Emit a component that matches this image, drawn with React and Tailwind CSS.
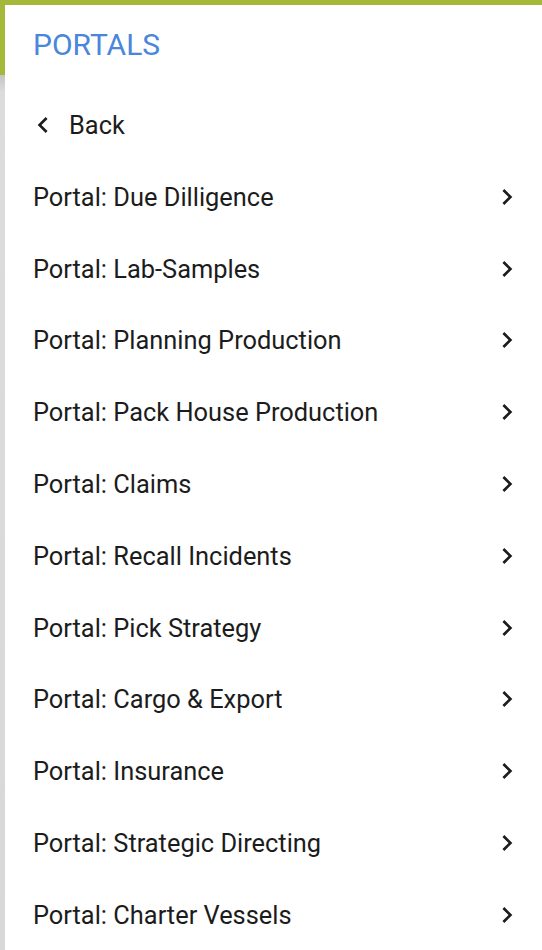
const portals = [
  "Due Dilligence",
  "Lab-Samples",
  "Planning Production",
  "Pack House Production",
  "Claims",
  "Recall Incidents",
  "Pick Strategy",
  "Cargo & Export",
  "Insurance",
  "Strategic Directing",
  "Charter Vessels",
];

function Chevron({ left = false }) {
  return (
    <svg width="32" height="32" viewBox="0 0 24 24" className="shrink-0 fill-[#1c1c1c]">
      {left ? (
        <path d="M15.41 7.41L14 6l-6 6 6 6 1.41-1.41L10.83 12z" />
      ) : (
        <path d="M10 6L8.59 7.41 13.17 12l-4.58 4.59L10 18l6-6z" />
      )}
    </svg>
  );
}

export default function App() {
  return (
    <div className="h-[950px] w-full overflow-hidden bg-[linear-gradient(to_bottom,#a6b83a_0,#a6b83a_75px,#c4c4c4_75px,#dcdcdc_92px,#d8d8d8_100%)] pl-[5px] pt-[5px] font-['Roboto',sans-serif]">
      <div className="h-full bg-white">
        <div className="h-[84px] pl-[28px] pt-[22px] text-[30px] leading-[36px] text-[#4a86d9]">
          PORTALS
        </div>
        <button type="button" className="flex h-[72px] w-full items-center gap-[10px] pl-[22px] text-[25.4px] text-[#1c1c1c]">
          <Chevron left />
          Back
        </button>
        {portals.map((name) => (
          <button
            key={name}
            type="button"
            className="flex h-[71.8px] w-full items-center justify-between pl-[28px] pr-[19px] text-left text-[25.4px] text-[#1c1c1c]"
          >
            <span>Portal: {name}</span>
            <Chevron />
          </button>
        ))}
      </div>
    </div>
  );
}
